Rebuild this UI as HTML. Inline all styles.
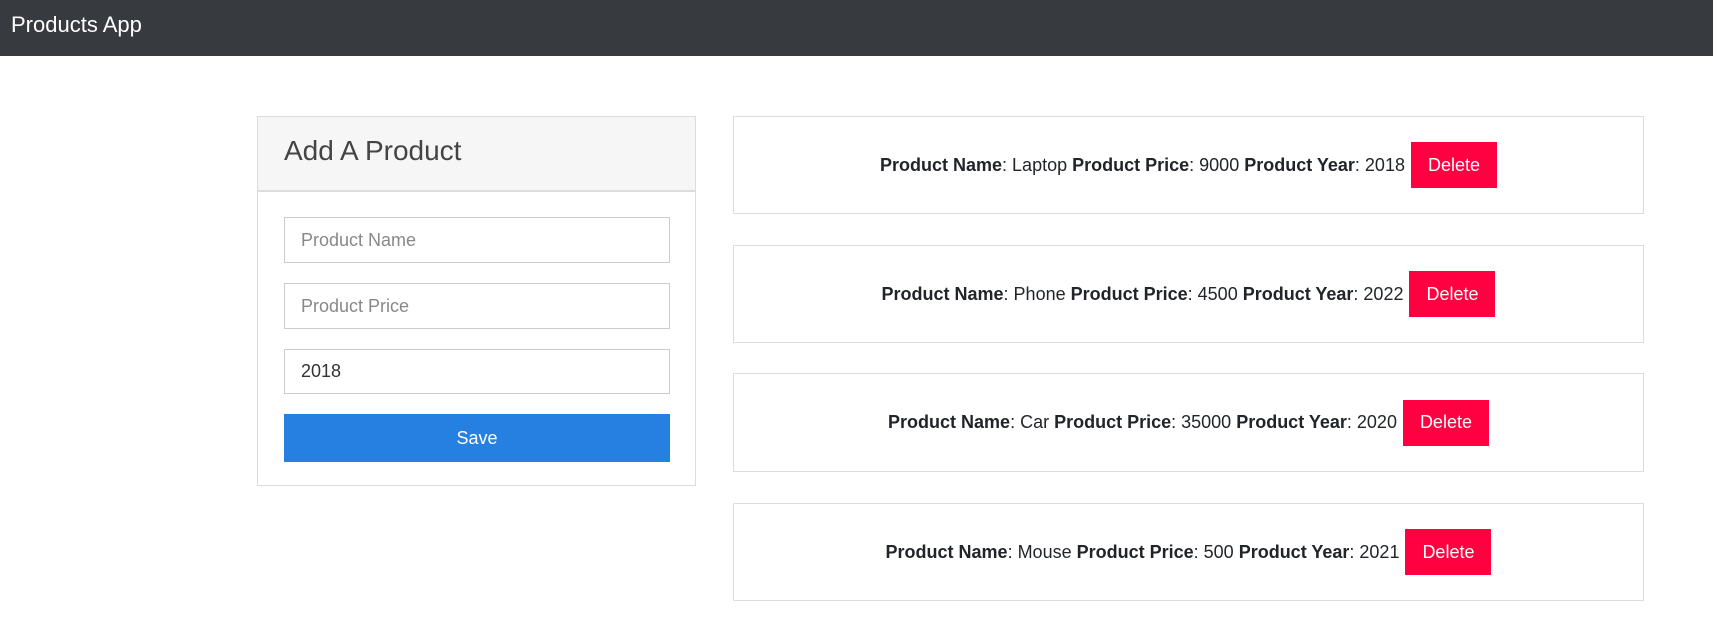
<!DOCTYPE html>
<html><head><style>
*{box-sizing:border-box;margin:0;padding:0}
body{width:1718px;height:632px;background:#fff;font-family:"Liberation Sans",sans-serif;color:#212529;position:relative;overflow:hidden}
.nav{position:absolute;left:0;top:0;width:1713px;height:56px;background:#373a3e;color:#fff;font-size:22px;padding:12px 0 0 11px}
.panel{position:absolute;left:257px;top:116px;width:439px;height:370px;border:1px solid #dcdcdc}
.ph{height:75px;background:#f6f6f6;border-bottom:2px solid #dcdcdc;font-size:28px;font-weight:300;color:#444;padding:18px 0 0 26px}
.in{position:absolute;left:26px;width:386px;border:1px solid #ccc;font-size:18px;color:#888;padding-left:16px;display:flex;align-items:center}
.save{position:absolute;left:26px;top:297px;width:386px;height:48px;background:#2680e2;color:#fff;font-size:18px;display:flex;align-items:center;justify-content:center}
.card{position:absolute;left:733px;width:911px;border:1px solid #dcdcdc;display:flex;align-items:center;justify-content:center;font-size:18px}
.card b{font-weight:700}
.del{display:inline-flex;align-items:center;justify-content:center;width:86px;height:46px;background:#ff0040;color:#fff;margin-left:6px;font-size:18px}
</style></head><body>
<div class="nav">Products App</div>
<div class="panel">
<div class="ph">Add A Product</div>
<div class="in" style="top:100px;height:46px">Product Name</div>
<div class="in" style="top:166px;height:46px">Product Price</div>
<div class="in" style="top:232px;height:45px;color:#333">2018</div>
<div class="save">Save</div>
</div>
<div class="card" style="top:116px;height:98px"><span><b>Product Name</b>: Laptop <b>Product Price</b>: 9000 <b>Product Year</b>: 2018</span><span class="del">Delete</span></div>
<div class="card" style="top:245px;height:98px"><span><b>Product Name</b>: Phone <b>Product Price</b>: 4500 <b>Product Year</b>: 2022</span><span class="del">Delete</span></div>
<div class="card" style="top:373px;height:99px"><span><b>Product Name</b>: Car <b>Product Price</b>: 35000 <b>Product Year</b>: 2020</span><span class="del">Delete</span></div>
<div class="card" style="top:503px;height:98px"><span><b>Product Name</b>: Mouse <b>Product Price</b>: 500 <b>Product Year</b>: 2021</span><span class="del">Delete</span></div>
</body></html>
